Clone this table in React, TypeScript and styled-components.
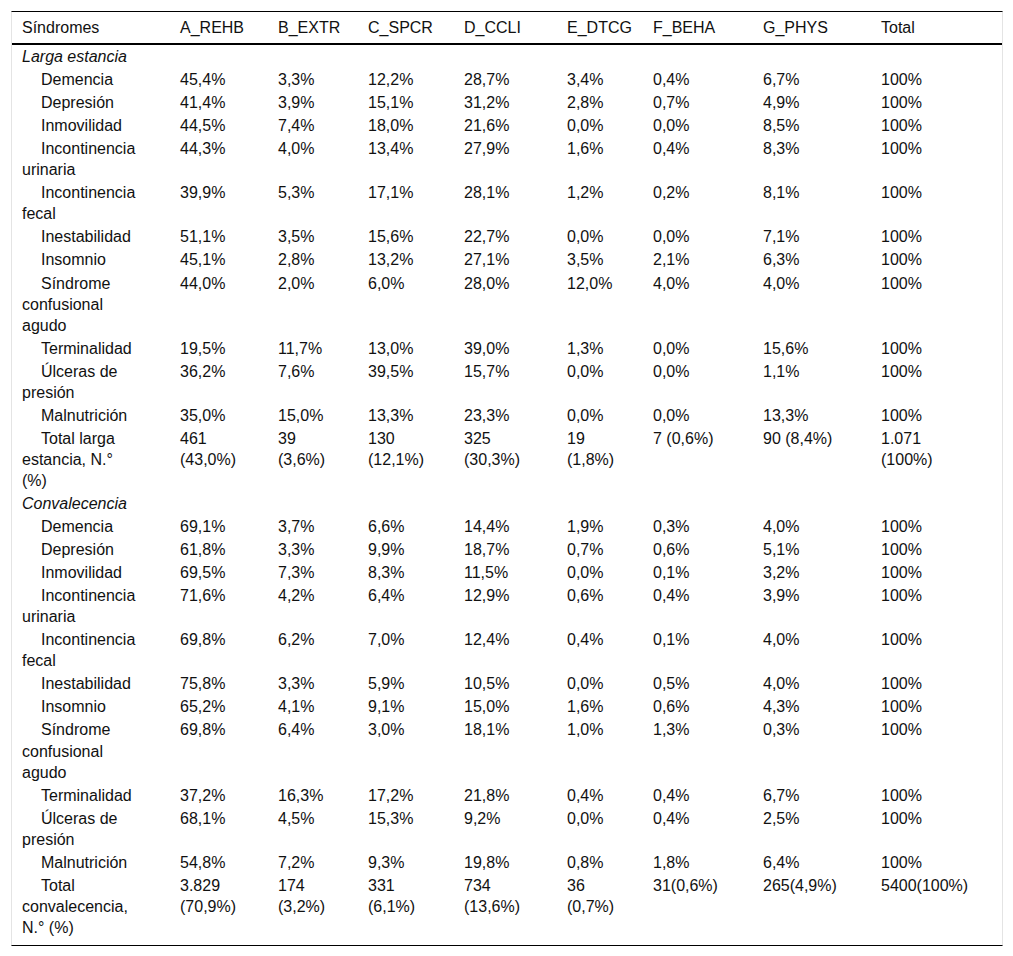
import React from 'react';
import styled, { createGlobalStyle } from 'styled-components';

const GlobalStyle = createGlobalStyle`
  body {
    margin: 0;
    background: #fff;
    font-family: "Liberation Sans", Arial, sans-serif;
    color: #111;
  }
`;

const Frame = styled.div`
  margin: 11px 0 0 11px;
  width: 990px;
  border-top: 1px solid #000;
  border-bottom: 1px solid #000;
  border-left: 1px solid #e4e4e4;
  border-right: 1px solid #e4e4e4;
  padding-bottom: 6px;
`;

const Table = styled.table`
  width: 990px;
  border-collapse: collapse;
  table-layout: fixed;
  font-size: 16px;
  line-height: 21.05px;
`;

const HeadCell = styled.th`
  text-align: left;
  font-weight: normal;
  padding: 5px 10px 5px;
  border-bottom: 2px solid #000;
  white-space: nowrap;
`;

const Cell = styled.td<{ $indent?: boolean }>`
  padding: 1px 10px;
  vertical-align: top;
  white-space: pre-line;
  text-indent: ${(p) => (p.$indent ? '19px' : '0')};
`;

const GroupCell = styled.td`
  padding: 1px 10px;
  font-style: italic;
`;

const widths = [158, 98, 90, 96, 103, 86, 110, 118, 131];
const headers = ['Síndromes', 'A_REHB', 'B_EXTR', 'C_SPCR', 'D_CCLI', 'E_DTCG', 'F_BEHA', 'G_PHYS', 'Total'];

type Group = { title: string; rows: string[][] };

const groups: Group[] = [
  {
    title: 'Larga estancia',
    rows: [
      ['Demencia', '45,4%', '3,3%', '12,2%', '28,7%', '3,4%', '0,4%', '6,7%', '100%'],
      ['Depresión', '41,4%', '3,9%', '15,1%', '31,2%', '2,8%', '0,7%', '4,9%', '100%'],
      ['Inmovilidad', '44,5%', '7,4%', '18,0%', '21,6%', '0,0%', '0,0%', '8,5%', '100%'],
      ['Incontinencia\nurinaria', '44,3%', '4,0%', '13,4%', '27,9%', '1,6%', '0,4%', '8,3%', '100%'],
      ['Incontinencia\nfecal', '39,9%', '5,3%', '17,1%', '28,1%', '1,2%', '0,2%', '8,1%', '100%'],
      ['Inestabilidad', '51,1%', '3,5%', '15,6%', '22,7%', '0,0%', '0,0%', '7,1%', '100%'],
      ['Insomnio', '45,1%', '2,8%', '13,2%', '27,1%', '3,5%', '2,1%', '6,3%', '100%'],
      ['Síndrome\nconfusional\nagudo', '44,0%', '2,0%', '6,0%', '28,0%', '12,0%', '4,0%', '4,0%', '100%'],
      ['Terminalidad', '19,5%', '11,7%', '13,0%', '39,0%', '1,3%', '0,0%', '15,6%', '100%'],
      ['Úlceras de\npresión', '36,2%', '7,6%', '39,5%', '15,7%', '0,0%', '0,0%', '1,1%', '100%'],
      ['Malnutrición', '35,0%', '15,0%', '13,3%', '23,3%', '0,0%', '0,0%', '13,3%', '100%'],
      ['Total larga\nestancia, N.°\n(%)', '461\n(43,0%)', '39\n(3,6%)', '130\n(12,1%)', '325\n(30,3%)', '19\n(1,8%)', '7 (0,6%)', '90 (8,4%)', '1.071\n(100%)'],
    ],
  },
  {
    title: 'Convalecencia',
    rows: [
      ['Demencia', '69,1%', '3,7%', '6,6%', '14,4%', '1,9%', '0,3%', '4,0%', '100%'],
      ['Depresión', '61,8%', '3,3%', '9,9%', '18,7%', '0,7%', '0,6%', '5,1%', '100%'],
      ['Inmovilidad', '69,5%', '7,3%', '8,3%', '11,5%', '0,0%', '0,1%', '3,2%', '100%'],
      ['Incontinencia\nurinaria', '71,6%', '4,2%', '6,4%', '12,9%', '0,6%', '0,4%', '3,9%', '100%'],
      ['Incontinencia\nfecal', '69,8%', '6,2%', '7,0%', '12,4%', '0,4%', '0,1%', '4,0%', '100%'],
      ['Inestabilidad', '75,8%', '3,3%', '5,9%', '10,5%', '0,0%', '0,5%', '4,0%', '100%'],
      ['Insomnio', '65,2%', '4,1%', '9,1%', '15,0%', '1,6%', '0,6%', '4,3%', '100%'],
      ['Síndrome\nconfusional\nagudo', '69,8%', '6,4%', '3,0%', '18,1%', '1,0%', '1,3%', '0,3%', '100%'],
      ['Terminalidad', '37,2%', '16,3%', '17,2%', '21,8%', '0,4%', '0,4%', '6,7%', '100%'],
      ['Úlceras de\npresión', '68,1%', '4,5%', '15,3%', '9,2%', '0,0%', '0,4%', '2,5%', '100%'],
      ['Malnutrición', '54,8%', '7,2%', '9,3%', '19,8%', '0,8%', '1,8%', '6,4%', '100%'],
      ['Total\nconvalecencia,\nN.° (%)', '3.829\n(70,9%)', '174\n(3,2%)', '331\n(6,1%)', '734\n(13,6%)', '36\n(0,7%)', '31(0,6%)', '265(4,9%)', '5400(100%)'],
    ],
  },
];

const App: React.FC = () => {
  return (
    <>
      <GlobalStyle />
      <Frame>
        <Table>
          <colgroup>
            {widths.map((w, i) => (
              <col key={i} style={{ width: w }} />
            ))}
          </colgroup>
          <thead>
            <tr>
              {headers.map((h) => (
                <HeadCell key={h}>{h}</HeadCell>
              ))}
            </tr>
          </thead>
          <tbody>
            {groups.map((g) => (
              <React.Fragment key={g.title}>
                <tr>
                  <GroupCell colSpan={9}>{g.title}</GroupCell>
                </tr>
                {g.rows.map((r, ri) => (
                  <tr key={ri}>
                    {r.map((v, ci) => (
                      <Cell key={ci} $indent={ci === 0}>
                        {v}
                      </Cell>
                    ))}
                  </tr>
                ))}
              </React.Fragment>
            ))}
          </tbody>
        </Table>
      </Frame>
    </>
  );
};

export default App;
